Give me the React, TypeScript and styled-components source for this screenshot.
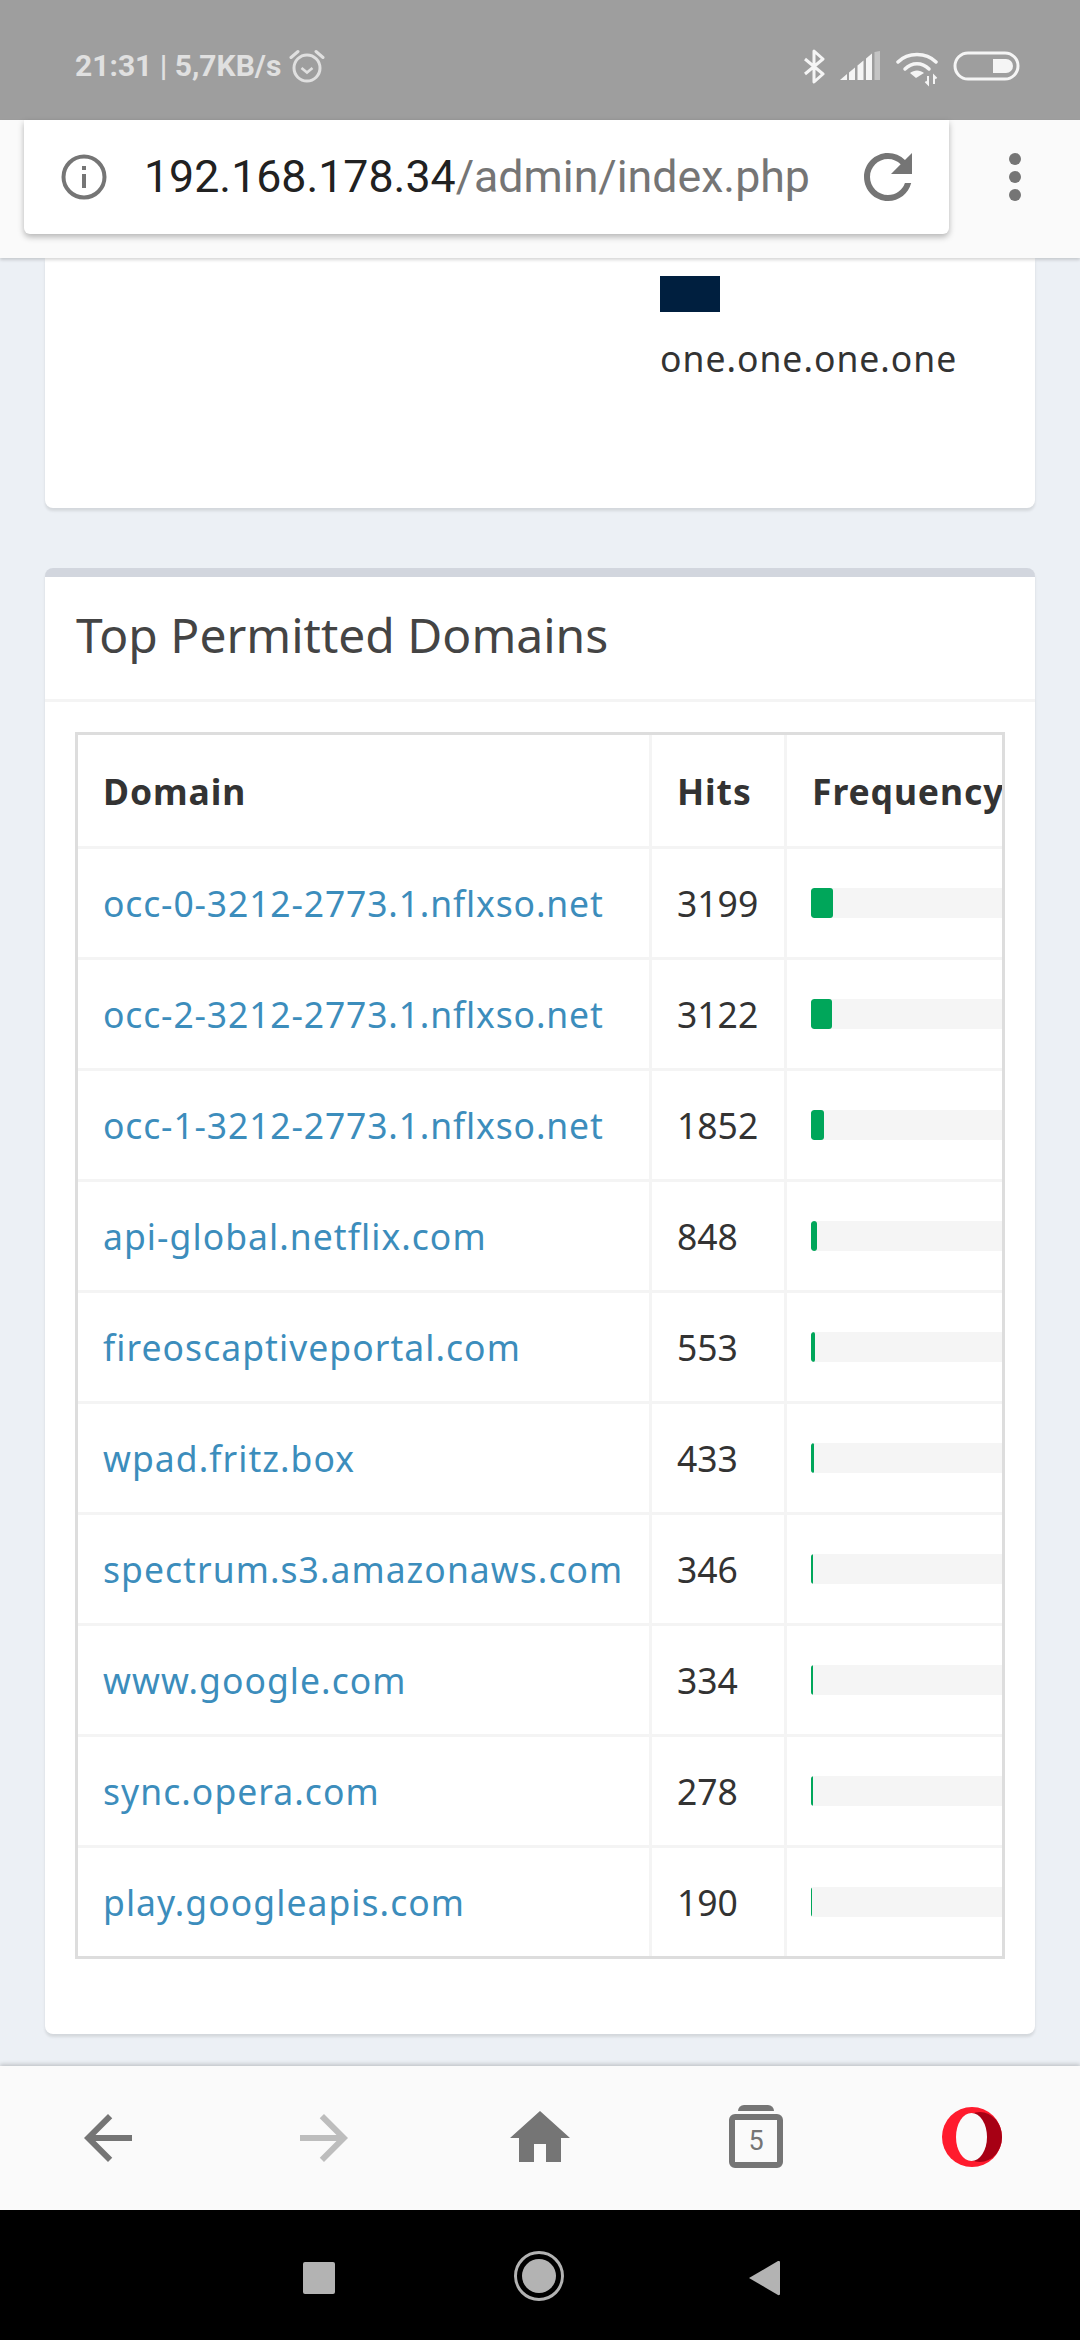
import React, { FunctionComponent } from 'react';
import styled, { createGlobalStyle } from 'styled-components';

const GlobalStyle = createGlobalStyle`
    html, body {
        margin: 0;
        padding: 0;
        background: #000;
    }
    * {
        box-sizing: border-box;
    }
`;

const Screen = styled.div`
    width: 1080px;
    height: 2340px;
    display: flex;
    flex-direction: column;
    overflow: hidden;
    font-family: 'Noto Sans', sans-serif;
    color: #333;
`;

const StatusBar = styled.div`
    height: 120px;
    flex: none;
    background: #9e9e9e;
    padding: 0 60px 0 75px;
    display: flex;
    align-items: flex-start;
    justify-content: space-between;
`;

const StatusLeft = styled.div`
    display: flex;
    align-items: center;
    gap: 8px;
    height: 34px;
    margin-top: 49px;
`;

const StatusText = styled.span`
    font-family: Roboto, sans-serif;
    font-weight: 700;
    font-size: 30px;
    line-height: 34px;
    color: #e0e0e0;
`;

const StatusRight = styled.div`
    display: flex;
    align-items: flex-start;
    margin-top: 49px;
`;

const Toolbar = styled.div`
    height: 138px;
    flex: none;
    background: #fafafa;
    display: flex;
    align-items: flex-start;
    padding-left: 24px;
    position: relative;
    z-index: 1;
    box-shadow: 0 2px 3px rgba(0, 0, 0, 0.16);
`;

const UrlBox = styled.div`
    width: 925px;
    height: 114px;
    flex: none;
    background: #fff;
    border-radius: 0 0 6px 6px;
    box-shadow: 0 3px 6px rgba(0, 0, 0, 0.28);
    display: flex;
    align-items: center;
    padding-left: 37px;
`;

const UrlText = styled.div`
    font-family: Roboto, sans-serif;
    font-size: 44.7px;
    line-height: 50px;
    margin-left: 37px;
    width: 708px;
    flex: none;
    white-space: nowrap;
    color: #757575;
`;

const UrlHost = styled.span`
    color: #212121;
`;

const Dots = styled.div`
    width: 131px;
    height: 114px;
    flex: none;
    display: flex;
    flex-direction: column;
    align-items: center;
    justify-content: center;
    gap: 6px;
`;

const Dot = styled.span`
    width: 12px;
    height: 12px;
    border-radius: 50%;
    background: #757575;
`;

const Content = styled.main`
    flex: 1;
    min-height: 0;
    background: #ecf0f5;
    padding: 0 45px;
    display: flex;
    flex-direction: column;
    gap: 60px;
`;

const Box = styled.section<{ $top?: boolean }>`
    flex: none;
    background: #fff;
    border-radius: ${(p) => (p.$top ? '8px' : '0 0 8px 8px')};
    border-top: ${(p) => (p.$top ? '9px solid #d2d6de' : 'none')};
    box-shadow: 0 3px 3px rgba(0, 0, 0, 0.1);
`;

const LegendBox = styled(Box)`
    height: 250px;
    padding: 18px 0 0 615px;
`;

const Swatch = styled.div`
    width: 60px;
    height: 36px;
    background: #001f3f;
`;

const LegendLabel = styled.div`
    font-size: 35.5px;
    line-height: 48px;
    letter-spacing: 1px;
    margin-top: 22px;
    white-space: nowrap;
`;

const BoxHeader = styled.header`
    height: 125px;
    border-bottom: 3px solid #f4f4f4;
    padding: 0 31px 7px;
    display: flex;
    align-items: center;
`;

const BoxTitle = styled.h3`
    margin: 0;
    font-size: 48px;
    font-weight: 400;
    line-height: 60px;
    color: #444;
    white-space: nowrap;
`;

const BoxBody = styled.div`
    padding: 30px 30px 75px;
`;

const TableFrame = styled.div`
    border: 3px solid #ddd;
    overflow: hidden;
`;

const Table = styled.table`
    border-collapse: separate;
    border-spacing: 0;
    table-layout: fixed;
    width: 1009px;
    font-size: 35.5px;
    line-height: 48px;
`;

const HeadCell = styled.th`
    height: 114px;
    padding: 0 0 0 25px;
    text-align: left;
    font-weight: 700;
    letter-spacing: 0.9px;
    color: #333;
    white-space: nowrap;
    border-right: 3px solid #f4f4f4;
    border-bottom: 3px solid #f4f4f4;

    &:last-child {
        border-right: none;
    }
`;

const Row = styled.tr`
    &:last-child td {
        border-bottom: none;
        height: 108px;
    }
`;

const Cell = styled.td`
    height: 111px;
    padding: 0 0 0 25px;
    white-space: nowrap;
    vertical-align: middle;
    border-right: 3px solid #f4f4f4;
    border-bottom: 3px solid #f4f4f4;

    &:last-child {
        border-right: none;
        padding-left: 24px;
    }
`;

const DomainLink = styled.a<{ $dense: boolean }>`
    color: #3c8dbc;
    text-decoration: none;
    letter-spacing: ${(p) => (p.$dense ? '0.85px' : '1.05px')};
`;

const Track = styled.div`
    height: 30px;
    background: #f5f5f5;
    border-radius: 3px;
    overflow: hidden;
`;

const Fill = styled.div`
    height: 100%;
    background: #00a65a;
    border-radius: 3px;
`;

const Footer = styled.nav`
    height: 144px;
    flex: none;
    background: #fafafa;
    display: grid;
    grid-template-columns: repeat(5, 216px);
    position: relative;
    box-shadow: 0 -2px 4px rgba(0, 0, 0, 0.18);
`;

const FooterSlot = styled.div`
    height: 144px;
    display: flex;
    align-items: flex-start;
    justify-content: center;
    padding-top: 36px;
`;

const TabsIcon = styled.div`
    width: 54px;
    height: 72px;
    display: flex;
    flex-direction: column;
    align-items: center;
    margin-top: 3px;
`;

const TabsLid = styled.span`
    width: 36px;
    height: 6px;
    background: #757575;
    border-radius: 6px 6px 0 0;
`;

const TabsCount = styled.span`
    width: 54px;
    height: 54px;
    margin-top: 3px;
    border: 6px solid #757575;
    border-radius: 6px;
    display: flex;
    align-items: center;
    justify-content: center;
    font-family: Roboto, sans-serif;
    font-size: 27px;
    color: #757575;
`;

const NavBar = styled.div`
    height: 130px;
    flex: none;
    background: #000;
    display: grid;
    grid-template-columns: 303px 32px 179px 50px 184px 32px;
    align-items: start;
`;

const NavIcon = styled.svg<{ $col: number; $top: number }>`
    grid-column: ${(p) => p.$col};
    grid-row: 1;
    margin-top: ${(p) => p.$top}px;
`;

const Icon = styled.svg<{ $gap?: number; $top?: number }>`
    display: block;
    flex: none;
    margin-left: ${(p) => p.$gap ?? 0}px;
    margin-top: ${(p) => p.$top ?? 0}px;
`;

const domains = [
    { name: 'occ-0-3212-2773.1.nflxso.net', hits: 3199 },
    { name: 'occ-2-3212-2773.1.nflxso.net', hits: 3122 },
    { name: 'occ-1-3212-2773.1.nflxso.net', hits: 1852 },
    { name: 'api-global.netflix.com', hits: 848 },
    { name: 'fireoscaptiveportal.com', hits: 553 },
    { name: 'wpad.fritz.box', hits: 433 },
    { name: 'spectrum.s3.amazonaws.com', hits: 346 },
    { name: 'www.google.com', hits: 334 },
    { name: 'sync.opera.com', hits: 278 },
    { name: 'play.googleapis.com', hits: 190 },
];

const ALARM = (
    <Icon width="36" height="34" viewBox="0 0 36 34" fill="none" stroke="#e0e0e0">
        <circle cx="18" cy="19" r="13" strokeWidth="3" />
        <path d="M12.5 19l5.5 4.5 5.5-4.5" strokeWidth="2.6" />
        <path d="M2 8.5 9 2.5M34 8.5 27 2.5" strokeWidth="3" strokeLinecap="round" />
    </Icon>
);

const BLUETOOTH = (
    <Icon width="22" height="35" viewBox="0 0 22 35" fill="none" stroke="#f5f5f5" strokeWidth="3" strokeLinejoin="round">
        <path d="M2 10l18 15-9 8V2l9 8L2 25" />
    </Icon>
);

const SIGNAL = (
    <Icon width="41" height="31" viewBox="0 0 41 31" $gap={15} $top={2}>
        <path d="M0 29l7-6v6z" fill="#f5f5f5" />
        <path d="M9 21.5l6-5V29H9z" fill="#f5f5f5" />
        <path d="M17.5 14.5l6-5V29h-6z" fill="#f5f5f5" />
        <path d="M26 7.5l6-5V29h-6z" fill="#f5f5f5" />
        <path d="M34.5 1l5.5-1v29h-5.5z" fill="#c4c4c4" />
    </Icon>
);

const WIFI = (
    <Icon width="44" height="36" viewBox="0 0 44 36" fill="none" stroke="#f5f5f5" $gap={15} $top={2}>
        <path d="M2 11C12 1 30 1 40 11" strokeWidth="3.5" strokeLinecap="round" />
        <path d="M9 18c7-7 17-7 24 0" strokeWidth="3.5" strokeLinecap="round" />
        <path d="M20 27l-6-5c4-3.5 10-3.5 14 0z" fill="#f5f5f5" stroke="none" />
        <path d="M32 25v8l-2.5-2.5M38 33v-8l2.5 2.5" strokeWidth="2" />
    </Icon>
);

const BATTERY = (
    <Icon width="67" height="30" viewBox="0 0 67 30" $gap={13} $top={2}>
        <rect x="2" y="2" width="63" height="26" rx="13" fill="none" stroke="#f5f5f5" strokeWidth="3" />
        <path d="M40 8h13a7 7 0 0 1 7 7 7 7 0 0 1-7 7H40z" fill="#f5f5f5" />
    </Icon>
);

const App: FunctionComponent = () => (
    <Screen>
        <GlobalStyle />
        <StatusBar>
            <StatusLeft>
                <StatusText>21:31 | 5,7KB/s</StatusText>
                {ALARM}
            </StatusLeft>
            <StatusRight>
                {BLUETOOTH}
                {SIGNAL}
                {WIFI}
                {BATTERY}
            </StatusRight>
        </StatusBar>

        <Toolbar>
            <UrlBox>
                <Icon width="46" height="46" viewBox="0 0 46 46" fill="none" stroke="#757575">
                    <circle cx="23" cy="23" r="20.5" strokeWidth="4" />
                    <path d="M23 20v14M23 12v4" strokeWidth="4" />
                </Icon>
                <UrlText>
                    <UrlHost>192.168.178.34</UrlHost>/admin/index.php
                </UrlText>
                <Icon width="72" height="72" viewBox="0 0 24 24" fill="#757575">
                    <path d="M17.65 6.35A7.958 7.958 0 0 0 12 4c-4.42 0-7.99 3.58-7.99 8s3.57 8 7.99 8c3.73 0 6.84-2.55 7.73-6h-2.08A5.99 5.99 0 0 1 12 18c-3.31 0-6-2.69-6-6s2.69-6 6-6c1.66 0 3.14.69 4.22 1.78L13 11h7V4l-2.35 2.35z" />
                </Icon>
            </UrlBox>
            <Dots>
                <Dot />
                <Dot />
                <Dot />
            </Dots>
        </Toolbar>

        <Content>
            <LegendBox>
                <Swatch />
                <LegendLabel>one.one.one.one</LegendLabel>
            </LegendBox>

            <Box $top>
                <BoxHeader>
                    <BoxTitle>Top Permitted Domains</BoxTitle>
                </BoxHeader>
                <BoxBody>
                    <TableFrame>
                        <Table>
                            <colgroup>
                                <col width="574" />
                                <col width="135" />
                                <col width="300" />
                            </colgroup>
                            <thead>
                                <tr>
                                    <HeadCell>Domain</HeadCell>
                                    <HeadCell>Hits</HeadCell>
                                    <HeadCell>Frequency</HeadCell>
                                </tr>
                            </thead>
                            <tbody>
                                {domains.map((domain) => (
                                    <Row key={domain.name}>
                                        <Cell>
                                            <DomainLink href="#" $dense={domain.name.startsWith('occ')}>
                                                {domain.name}
                                            </DomainLink>
                                        </Cell>
                                        <Cell>{domain.hits}</Cell>
                                        <Cell>
                                            <Track>
                                                <Fill style={{ width: (domain.hits / 3199) * 22 }} />
                                            </Track>
                                        </Cell>
                                    </Row>
                                ))}
                            </tbody>
                        </Table>
                    </TableFrame>
                </BoxBody>
            </Box>
        </Content>

        <Footer>
            <FooterSlot>
                <Icon width="72" height="72" viewBox="0 0 24 24" fill="#757575">
                    <path d="M20 11H7.83l5.59-5.59L12 4l-8 8 8 8 1.41-1.41L7.83 13H20v-2z" />
                </Icon>
            </FooterSlot>
            <FooterSlot>
                <Icon width="72" height="72" viewBox="0 0 24 24" fill="#bdbdbd">
                    <path d="M4 11h12.17l-5.59-5.59L12 4l8 8-8 8-1.41-1.41L16.17 13H4v-2z" />
                </Icon>
            </FooterSlot>
            <FooterSlot>
                <Icon width="72" height="72" viewBox="0 0 24 24" fill="#757575">
                    <path d="M10 20v-6h4v6h5v-8h3L12 3 2 12h3v8z" />
                </Icon>
            </FooterSlot>
            <FooterSlot>
                <TabsIcon>
                    <TabsLid />
                    <TabsCount>5</TabsCount>
                </TabsIcon>
            </FooterSlot>
            <FooterSlot>
                <Icon width="60" height="60" viewBox="0 0 60 60" $top={5}>
                    <circle cx="30" cy="30" r="30" fill="#ff1b2d" />
                    <ellipse cx="38" cy="30" rx="22" ry="25" fill="#a70014" />
                    <ellipse cx="29.5" cy="30" rx="15.5" ry="24" fill="#fafafa" />
                </Icon>
            </FooterSlot>
        </Footer>

        <NavBar>
            <NavIcon $col={2} $top={52} width="32" height="32" viewBox="0 0 32 32">
                <rect width="32" height="32" rx="2" fill="#b3b3b3" />
            </NavIcon>
            <NavIcon $col={4} $top={41} width="50" height="50" viewBox="0 0 50 50">
                <circle cx="25" cy="25" r="23.5" fill="none" stroke="#b3b3b3" strokeWidth="3" />
                <circle cx="25" cy="25" r="17" fill="#b3b3b3" />
            </NavIcon>
            <NavIcon $col={6} $top={50} width="32" height="36" viewBox="0 0 32 36">
                <path d="M1 18 30 1q2-.5 2 1v32q0 1.5-2 1z" fill="#b3b3b3" />
            </NavIcon>
        </NavBar>
    </Screen>
);

export default App;
